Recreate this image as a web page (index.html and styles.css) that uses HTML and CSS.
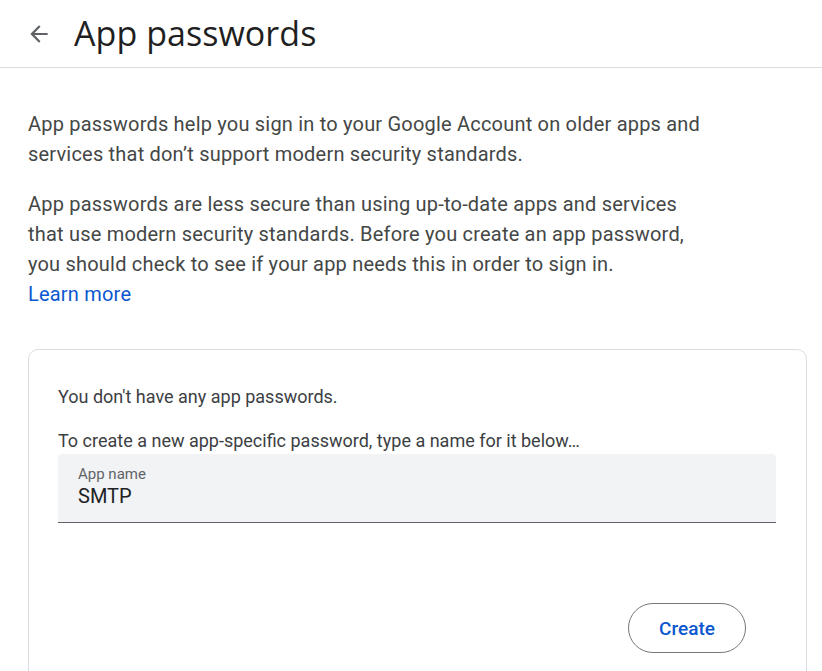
FILE: index.html
```html
<!DOCTYPE html>
<html lang="en">
<head>
<meta charset="utf-8">
<title>App passwords</title>
<link rel="stylesheet" href="styles.css">
</head>
<body>
<header class="topbar">
  <button class="back" aria-label="Back">
    <svg width="24" height="24" viewBox="0 0 24 24"><path d="M20 11H7.83l5.59-5.59L12 4l-8 8 8 8 1.41-1.41L7.83 13H20v-2z" fill="#5f6368"/></svg>
  </button>
  <h1 class="title">App passwords</h1>
</header>
<main class="content">
  <p class="intro">App passwords help you sign in to your Google Account on older apps and services that don’t support modern security standards.</p>
  <p class="intro">App passwords are less secure than using up-to-date apps and services that use modern security standards. Before you create an app password, you should check to see if your app needs this in order to sign in.<br><a class="link" href="#">Learn more</a></p>
  <section class="card">
    <p class="note">You don't have any app passwords.</p>
    <p class="prompt">To create a new app-specific password, type a name for it below…</p>
    <div class="field">
      <span class="field-label">App name</span>
      <span class="field-value">SMTP</span>
    </div>
    <div class="actions">
      <button class="create">Create</button>
    </div>
  </section>
</main>
</body>
</html>
```
FILE: styles.css
```css
html, body {
  margin: 0;
  padding: 0;
  background: #fff;
  font-family: Roboto, "Liberation Sans", sans-serif;
}
.topbar {
  height: 68px;
  box-sizing: border-box;
  border-bottom: 1px solid #dadce0;
  display: flex;
  align-items: center;
  padding-left: 26px;
}
.back {
  width: 26px;
  height: 26px;
  padding: 0;
  border: 0;
  background: none;
  display: flex;
  align-items: center;
  justify-content: center;
  margin-right: 22px;
}
.back svg { width: 26px; height: 26px; }
.title {
  margin: 0;
  font-family: "Open Sans", Roboto, sans-serif;
  font-weight: 400;
  font-size: 34px;
  color: #1f1f1f;
  letter-spacing: 0.05px;
  position: relative;
  top: -1px;
}
.content {
  padding: 41px 15px 0 28px;
}
.intro {
  margin: 0 0 20px;
  font-size: 20px;
  line-height: 30px;
  letter-spacing: 0.2px;
  color: #444746;
  max-width: 690px;
}
.link {
  color: #0b57d0;
  text-decoration: none;
}
.card {
  margin-top: 40px;
  border: 1px solid #dadce0;
  border-radius: 10px;
  padding: 31px 30px 40px 29px;
  min-height: 320px;
}
.note {
  margin: 0 0 15px;
  font-size: 18px;
  line-height: 32px;
  color: #3c4043;
}
.prompt {
  margin: 0;
  font-size: 18px;
  line-height: 26px;
  color: #3c4043;
}
.field {
  background: #f1f3f4;
  border-radius: 4px 4px 0 0;
  border-bottom: 1px solid #5f6368;
  height: 69px;
  box-sizing: border-box;
  padding: 10px 20px 0;
  display: flex;
  flex-direction: column;
}
.field-label {
  font-size: 15px;
  line-height: 20px;
  color: #5f6368;
}
.field-value {
  font-size: 20px;
  line-height: 24px;
  color: #202124;
}
.actions {
  display: flex;
  justify-content: flex-end;
  margin-top: 80px;
  padding-right: 30px;
}
.create {
  width: 118px;
  height: 50px;
  border: 1px solid #747775;
  border-radius: 25px;
  background: #fff;
  color: #0b57d0;
  font-family: Roboto, sans-serif;
  font-size: 19px;
  font-weight: 500;
}
```
